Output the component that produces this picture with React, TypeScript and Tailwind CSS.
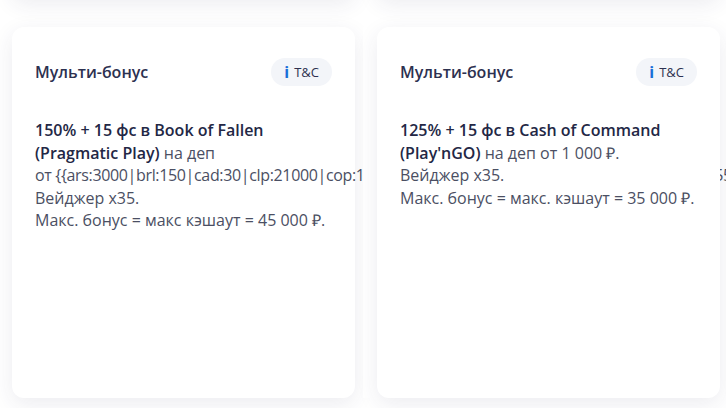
import React from "react";

const longToken =
  "от {{ars:3000|brl:150|cad:30|clp:21000|cop:120000|eur:25|gbp:25|inr:2555|jpy:5555|kzt:15555|mxn:555|nok:255|nzd:55|pen:85|pln:105|rub:1000|try:900|usd:25|uzs:300000}} ₽.";

function TcPill() {
  return (
    <div className="flex h-[28px] items-center gap-[5px] rounded-full bg-[#f3f5f9] px-[13px]">
      <span className="text-[16px] font-bold leading-none text-[#1a6fd8]">i</span>
      <span className="text-[13px] font-medium leading-none text-[#2d3150]">T&amp;C</span>
    </div>
  );
}

function Card({ children }: { children: React.ReactNode }) {
  return (
    <div className="relative flex h-[371px] w-[343px] shrink-0 flex-col rounded-[12px] bg-white px-[23px] pt-[31px] shadow-[0_6px_22px_rgba(45,45,90,0.09)]">
      <div className="flex h-[28px] items-center justify-between">
        <span className="text-[16px] font-semibold text-[#2d3150]">Мульти-бонус</span>
        <TcPill />
      </div>
      <p className="mt-[33px] text-[16px] leading-[22.5px] text-[#4b4f63]">{children}</p>
    </div>
  );
}

function Slide({ children, first }: { children: React.ReactNode; first?: boolean }) {
  return (
    <div className={first ? "relative shrink-0" : "relative shrink-0 bg-white pl-[14px]"}>{children}</div>
  );
}

function Ghost() {
  return <div className="relative h-[101px] w-[343px] shrink-0 rounded-[12px] bg-white shadow-[0_6px_22px_rgba(45,45,90,0.09)]" />;
}

export default function App() {
  return (
    <div className="h-[408px] w-[726px] overflow-hidden bg-white font-['Open_Sans',sans-serif]">
      <div className="-mt-[103px] flex flex-col gap-[29px] pl-[12px]">
        <div className="flex gap-[22px]">
          <Ghost />
          <Ghost />
          <Ghost />
        </div>
        <div className="flex gap-[8px]">
          <Slide first>
            <Card>
              <b className="font-semibold text-[#232745]">150% + 15 фс в Book of Fallen (Pragmatic Play)</b> на деп{" "}
              <span className="whitespace-nowrap tracking-[-0.35px]">{longToken}</span>
              <br />
              Вейджер х35.
              <br />
              Макс. бонус = макс кэшаут = 45 000 ₽.
            </Card>
          </Slide>
          <Slide>
            <Card>
              <b className="font-semibold text-[#232745]">125% + 15 фс в Cash of Command (Play'nGO)</b> на деп от 1 000 ₽.
              <br />
              Вейджер х35.
              <br />
              Макс. бонус = макс. кэшаут = 35 000 ₽.
            </Card>
          </Slide>
          <Slide>
            <div className="relative h-[371px] w-[343px] shrink-0 rounded-[12px] bg-white shadow-[0_6px_22px_rgba(45,45,90,0.09)]" />
          </Slide>
        </div>
      </div>
    </div>
  );
}
